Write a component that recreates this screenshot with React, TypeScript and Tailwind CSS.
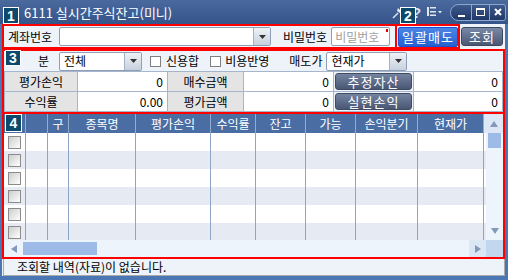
import React from "react";

const cols = [
  { w: "w-[22px]", label: "" },
  { w: "w-[22px]", label: "" },
  { w: "w-[21px]", label: "구" },
  { w: "w-[67px]", label: "종목명" },
  { w: "w-[75px]", label: "평가손익" },
  { w: "w-[45px]", label: "수익률" },
  { w: "w-[50px]", label: "잔고" },
  { w: "w-[50px]", label: "가능" },
  { w: "w-[62px]", label: "손익분기" },
  { w: "w-[66px]", label: "현재가" },
];

function Badge({ n, className }: { n: string; className: string }) {
  return (
    <div
      className={`absolute z-10 flex items-center justify-center bg-[#0b4a6c] border border-white text-white text-[14px] font-bold leading-none font-['Liberation_Sans',sans-serif] ${className}`}
    >
      {n}
    </div>
  );
}

function DropBtn() {
  return (
    <div className="w-[17px] h-full flex items-center justify-center bg-linear-to-b from-[#eef2f7] to-[#c7d1de] border-l border-[#a3b2c6]">
      <svg width="7" height="4" viewBox="0 0 7 4">
        <path d="M0 0h7L3.5 4z" fill="#333" />
      </svg>
    </div>
  );
}

function Select({ value, className }: { value: string; className: string }) {
  return (
    <div className={`flex h-[19px] border border-[#8d9eb6] rounded-[2px] bg-white ${className}`}>
      <div className="flex-1 pl-[4px] flex items-center leading-none">{value}</div>
      <DropBtn />
    </div>
  );
}

function Check({ className }: { className: string }) {
  return <div className={`w-[11px] h-[11px] border border-[#7f7f7f] bg-white ${className}`} />;
}

function TitleBar() {
  return (
    <div className="h-[24px] shrink-0 flex items-center bg-linear-to-b from-[#4a6a9e] to-[#34548a] pl-[24px] pr-[2px]">
      <span className="text-white text-[13px] leading-none">6111 실시간주식잔고(미니)</span>
      <div className="ml-auto flex items-center">
        <svg width="12" height="14" viewBox="0 0 12 14">
          <path d="M1 13L6 8" stroke="#e3e9f2" strokeWidth="1.5" />
          <path d="M6 3L10 7L8 8L5 6z" fill="#e3e9f2" />
        </svg>
        <span className="ml-[8px] w-[10px] text-[15px] font-bold leading-none text-[#d7dfeb] font-['Liberation_Sans',sans-serif]">?</span>
        <svg className="ml-[5px]" width="16" height="10" viewBox="0 0 16 10">
          <rect x="0" y="0" width="2" height="9" fill="#dfe6f0" />
          <rect x="3" y="0" width="6" height="1.5" fill="#dfe6f0" />
          <rect x="3" y="4" width="6" height="1.5" fill="#dfe6f0" />
          <rect x="3" y="7.5" width="6" height="1.5" fill="#dfe6f0" />
          <path d="M11 4h4l-2 2.5z" fill="#dfe6f0" />
        </svg>
        <div className="ml-[7px] flex h-[17px] rounded-l-[9px] rounded-r-[3px] border border-[#8ea7cf] bg-linear-to-b from-[#3e5b8d] to-[#1f3867] overflow-hidden">
          <div className="w-[21px] flex items-end justify-center pb-[3px] border-r border-[#8ea7cf]">
            <div className="w-[7px] h-[2px] bg-white" />
          </div>
          <div className="w-[18px] flex items-center justify-center border-r border-[#8ea7cf]">
            <div className="w-[9px] h-[8px] border border-white border-t-2" />
          </div>
          <div className="w-[15px] flex items-center justify-center">
            <svg width="8" height="8" viewBox="0 0 8 8">
              <path d="M1 1L7 7M7 1L1 7" stroke="#fff" strokeWidth="2" />
            </svg>
          </div>
        </div>
      </div>
    </div>
  );
}

function TopRow() {
  return (
    <div className="h-[25px] shrink-0 flex">
      <div className="w-[395px] border-2 border-[#ff0000] flex items-center pl-[4px]">
        <span className="w-[48px] leading-none">계좌번호</span>
        <div className="ml-[3px] w-[212px] h-[19px] flex border border-[#8d9eb6] rounded-[2px] bg-white">
          <div className="flex-1" />
          <DropBtn />
        </div>
        <span className="ml-[12px] leading-none">비밀번호</span>
        <div className="relative ml-[4px] w-[59px] h-[19px] border border-[#8d9eb6] rounded-[2px] bg-white flex items-center pl-[3px] text-[#a0a0a0] leading-none">
          비밀번호
          <span className="absolute right-[1px] top-[1px] w-[2px] h-[3px] bg-[#e00000]" />
        </div>
      </div>
      <div className="w-[63px] border-2 border-l-0 border-[#ff0000] flex items-center pl-[1px]">
        <div className="w-[60px] h-[20px] flex items-center justify-center rounded-[2px] border border-[#1d4fd6] bg-linear-to-b from-[#4a86e6] to-[#2461cf] text-white text-[13px] leading-none tracking-[1px]">
          일괄매도
        </div>
      </div>
      <div className="ml-[1px] flex items-center">
        <div className="w-[42px] h-[19px] flex items-center justify-center rounded-[3px] border border-[#3c4861] bg-linear-to-b from-[#7a89a5] to-[#4a5876] text-white text-[13px] leading-none tracking-[1px]">
          조회
        </div>
      </div>
    </div>
  );
}

function Label({ text }: { text: string }) {
  return <div className="bg-[#e4e4e4] flex items-center justify-center leading-none">{text}</div>;
}

function Value({ text }: { text: string }) {
  return <div className="bg-white flex items-center justify-end pr-[4px] leading-none">{text}</div>;
}

function ActBtn({ text }: { text: string }) {
  return (
    <div className="bg-[#eef3fa] p-[1px]">
      <div className="h-full flex items-center justify-center rounded-[3px] border border-[#3f4b62] bg-linear-to-b from-[#7484a0] to-[#4a5774] text-white text-[13px] leading-none tracking-[1px]">
        {text}
      </div>
    </div>
  );
}

function FilterBox() {
  return (
    <div className="h-[65px] shrink-0 border-2 border-[#ff0000] flex flex-col">
      <div className="h-[20px] flex items-center">
        <span className="w-[45px] text-right leading-none">분</span>
        <Select className="ml-[10px] w-[83px]" value="전체" />
        <Check className="ml-[8px]" />
        <span className="ml-[5px] leading-none">신용합</span>
        <Check className="ml-[11px]" />
        <span className="ml-[4px] leading-none">비용반영</span>
        <span className="ml-[20px] leading-none">매도가</span>
        <Select className="ml-[4px] w-[81px]" value="현재가" />
      </div>
      <div className="h-[41px] grid grid-cols-[72px_89px_75px_89px_79px_1fr] grid-rows-[19px_19px] gap-px bg-[#a5b5cb] border border-[#a5b5cb]">
        <Label text="평가손익" />
        <Value text="0" />
        <Label text="매수금액" />
        <Value text="0" />
        <ActBtn text="추정자산" />
        <Value text="0" />
        <Label text="수익률" />
        <Value text="0.00" />
        <Label text="평가금액" />
        <Value text="0" />
        <ActBtn text="실현손익" />
        <Value text="0" />
      </div>
    </div>
  );
}

function GridBox() {
  const rows = [0, 1, 2, 3, 4, 5];
  return (
    <div className="-mt-[2px] h-[147px] shrink-0 border-2 border-[#ff0000] flex flex-col">
      <div className="h-[19px] shrink-0 flex">
        {cols.map((c, i) => (
          <div
            key={i}
            className={`${c.w} h-full bg-[#4a6ea4] border-r border-[#93abd0] text-white flex items-center justify-center leading-none`}
          >
            {c.label}
          </div>
        ))}
        <div className="flex-1 bg-[#dde7f5] flex items-center justify-center">
          <svg width="8" height="6" viewBox="0 0 8 6">
            <path d="M0 6h8L4 0z" fill="#8299bb" />
          </svg>
        </div>
      </div>
      <div className="flex-1 flex min-h-0">
        <div className="flex-1 overflow-hidden">
          {rows.map((r) => (
            <div key={r} className={`h-[18px] flex ${r % 2 ? "bg-[#e6ebf3]" : "bg-white"}`}>
              {cols.map((c, i) => (
                <div key={i} className={`${c.w} h-full border-r border-[#8da4c6] flex items-center justify-center`}>
                  {i === 0 && (
                    <div className="w-[13px] h-[13px] border border-[#8b8b8b] bg-linear-to-br from-[#cdcdcd] to-white" />
                  )}
                </div>
              ))}
            </div>
          ))}
        </div>
        <div className="w-[17px] bg-[#eef4fc] flex flex-col items-center">
          <div className="w-[13px] h-[15px] bg-[#9dbbe6]" />
          <div className="flex-1" />
          <svg className="mb-[6px]" width="8" height="6" viewBox="0 0 8 6">
            <path d="M0 0h8L4 6z" fill="#8299bb" />
          </svg>
        </div>
      </div>
      <div className="h-[17px] shrink-0 flex bg-[#eef4fc]">
        <div className="w-[19px] flex items-center justify-center">
          <svg width="6" height="8" viewBox="0 0 6 8">
            <path d="M6 0v8L0 4z" fill="#8299bb" />
          </svg>
        </div>
        <div className="w-[74px] my-[2px] bg-[#9dbbe6]" />
        <div className="flex-1" />
        <div className="w-[17px] bg-[#dce7f5] flex items-center justify-center">
          <svg width="6" height="8" viewBox="0 0 6 8">
            <path d="M0 0v8L6 4z" fill="#8299bb" />
          </svg>
        </div>
        <div className="w-[17px] bg-[#c3d6ef]" />
      </div>
    </div>
  );
}

function StatusBar() {
  return (
    <div className="h-[17px] shrink-0 ml-px border-x border-b border-[#a9a9a9] flex items-center pl-[13px] leading-none">
      조회할 내역(자료)이 없습니다.
    </div>
  );
}

export default function App() {
  return (
    <div className="relative w-[508px] h-[280px] bg-[#4a76b3] flex flex-col overflow-hidden text-[12px] text-black font-['Noto_Sans_CJK_KR','Noto_Sans',sans-serif]">
      <TitleBar />
      <div className="flex-1 flex flex-col ml-[2px] mr-[3px] mb-[4px] bg-[#eef3fa]">
        <TopRow />
        <FilterBox />
        <GridBox />
        <StatusBar />
      </div>
      <Badge n="1" className="left-[3px] top-[7px] w-[16px] h-[17px]" />
      <Badge n="2" className="left-[400px] top-[7px] w-[16px] h-[17px]" />
      <Badge n="3" className="left-[5px] top-[50px] w-[16px] h-[16px]" />
      <Badge n="4" className="left-[5px] top-[114px] w-[17px] h-[18px]" />
    </div>
  );
}
